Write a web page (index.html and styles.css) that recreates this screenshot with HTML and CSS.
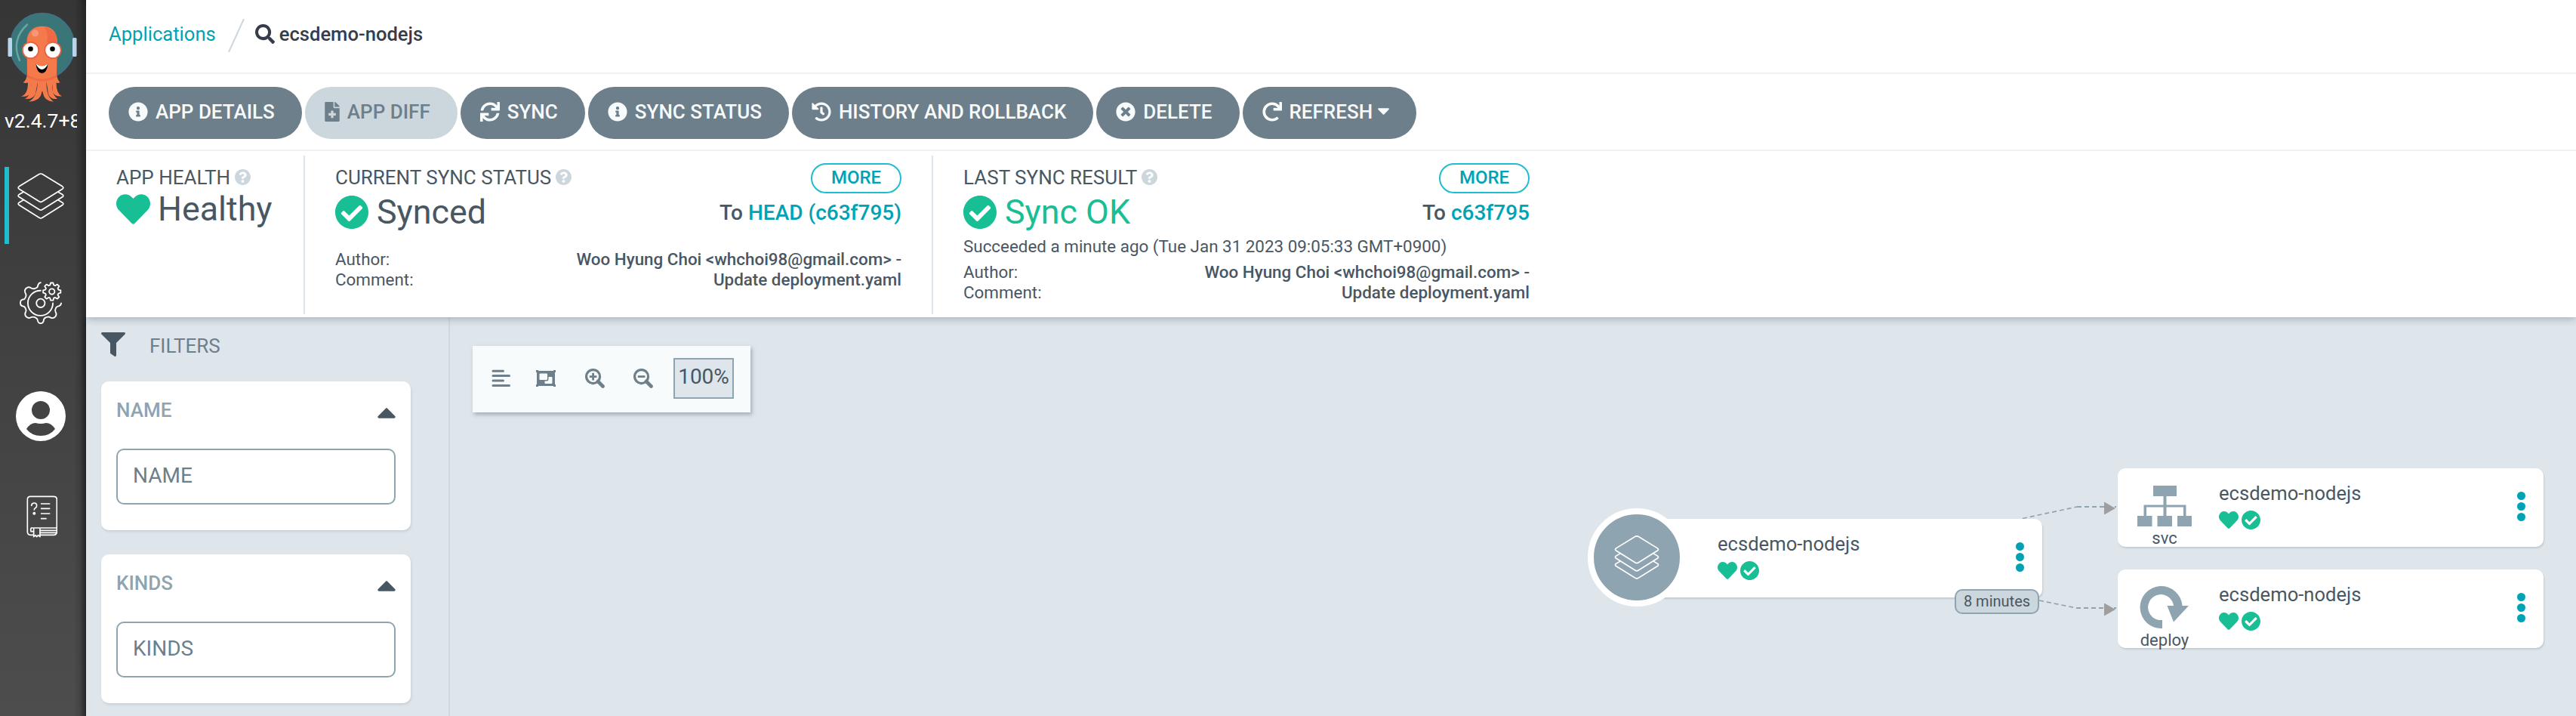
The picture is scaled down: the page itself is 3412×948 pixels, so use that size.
FILE: index.html
```html
<!DOCTYPE html>
<html lang="en">
<head>
<meta charset="utf-8">
<title>ecsdemo-nodejs</title>
<link rel="stylesheet" href="styles.css">
</head>
<body>
<svg class="defs" width="0" height="0">
  <symbol id="info" viewBox="0 0 512 512"><path d="M256 8C119.043 8 8 119.083 8 256c0 136.997 111.043 248 248 248s248-111.003 248-248C504 119.083 392.957 8 256 8zm0 110c23.196 0 42 18.804 42 42s-18.804 42-42 42-42-18.804-42-42 18.804-42 42-42zm56 254c0 6.627-5.373 12-12 12h-88c-6.627 0-12-5.373-12-12v-24c0-6.627 5.373-12 12-12h12v-64h-12c-6.627 0-12-5.373-12-12v-24c0-6.627 5.373-12 12-12h64c6.627 0 12 5.373 12 12v100h12c6.627 0 12 5.373 12 12v24z"/></symbol>
  <symbol id="check" viewBox="8 8 496 496"><path d="M504 256c0 136.967-111.033 248-248 248S8 392.967 8 256 119.033 8 256 8s248 111.033 248 248zM227.314 387.314l184-184c6.248-6.248 6.248-16.379 0-22.627l-22.627-22.627c-6.248-6.249-16.379-6.249-22.628 0L216 308.118l-70.059-70.059c-6.248-6.248-16.379-6.248-22.628 0l-22.627 22.627c-6.248 6.248-6.248 16.379 0 22.627l104 104c6.249 6.249 16.379 6.249 22.628.001z"/></symbol>
  <symbol id="heart" viewBox="0 32 512 448"><path d="M462.3 62.6C407.5 15.9 326 24.3 275.7 76.2L256 96.5l-19.7-20.3C186.1 24.3 104.5 15.9 49.7 62.6c-62.8 53.6-66.1 149.8-9.9 207.9l193.5 199.8c12.5 12.9 32.8 12.9 45.3 0l193.5-199.8c56.3-58.1 53-154.3-9.8-207.9z"/></symbol>
  <symbol id="question" viewBox="8 8 496 496"><path d="M504 256c0 136.997-111.043 248-248 248S8 392.997 8 256C8 119.083 119.043 8 256 8s248 111.083 248 248zM262.655 90c-54.497 0-89.255 22.957-116.549 63.758-3.536 5.286-2.353 12.415 2.715 16.258l34.699 26.31c5.205 3.947 12.621 3.008 16.665-2.122 17.864-22.658 30.113-35.797 57.303-35.797 20.429 0 45.698 13.148 45.698 32.958 0 14.976-12.363 22.667-32.534 33.976C247.128 238.528 216 254.941 216 296v4c0 6.627 5.373 12 12 12h56c6.627 0 12-5.373 12-12v-1.333c0-28.462 83.186-29.647 83.186-106.667 0-58.002-60.165-102-116.531-102zM256 338c-25.365 0-46 20.635-46 46 0 25.364 20.635 46 46 46s46-20.636 46-46c0-25.365-20.635-46-46-46z"/></symbol>
  <symbol id="times" viewBox="0 0 512 512"><path d="M256 8C119 8 8 119 8 256s111 248 248 248 248-111 248-248S393 8 256 8zm121.6 313.1c4.7 4.7 4.7 12.3 0 17L338 377.6c-4.7 4.7-12.3 4.7-17 0L256 312l-65.1 65.6c-4.7 4.7-12.3 4.7-17 0L134.4 338c-4.7-4.7-4.7-12.3 0-17l65.6-65-65.6-65.1c-4.7-4.7-4.7-12.3 0-17l39.6-39.6c4.7-4.7 12.3-4.7 17 0l65 65.7 65.1-65.6c4.7-4.7 12.3-4.7 17 0l39.6 39.6c4.7 4.7 4.7 12.3 0 17L312 256l65.6 65.1z"/></symbol>
  <symbol id="search" viewBox="0 0 512 512"><path d="M505 442.7L405.3 343c-4.5-4.5-10.6-7-17-7H372c27.6-35.3 44-79.7 44-128C416 93.1 322.9 0 208 0S0 93.1 0 208s93.1 208 208 208c48.3 0 92.7-16.4 128-44v16.3c0 6.4 2.5 12.5 7 17l99.7 99.7c9.4 9.4 24.6 9.4 33.9 0l28.3-28.3c9.4-9.4 9.4-24.6.1-34zM208 336c-70.7 0-128-57.2-128-128 0-70.7 57.2-128 128-128 70.7 0 128 57.2 128 128 0 70.7-57.2 128-128 128z"/></symbol>
  <symbol id="filter" viewBox="0 0 512 512"><path d="M487.976 0H24.028C2.71 0-8.047 25.866 7.058 40.971L192 225.941V432c0 7.831 3.821 15.17 10.237 19.662l80 55.98C298.02 518.69 320 507.493 320 487.98V225.941l184.947-184.97C520.021 25.896 509.338 0 487.976 0z"/></symbol>
  <symbol id="history" viewBox="0 0 512 512"><path d="M504 255.531c.253 136.64-111.18 248.372-247.82 248.468-59.015.042-113.223-20.53-155.822-54.911-11.077-8.94-11.905-25.541-1.839-35.607l11.267-11.267c8.609-8.609 22.353-9.551 31.891-1.984C173.062 425.135 212.781 440 256 440c101.705 0 184-82.311 184-184 0-101.705-82.311-184-184-184-48.814 0-93.149 18.969-126.068 49.932l50.754 50.754c10.08 10.08 2.941 27.314-11.313 27.314H24c-8.837 0-16-7.163-16-16V38.627c0-14.254 17.234-21.393 27.314-11.314l49.372 49.372C129.209 34.136 189.552 8 256 8c136.81 0 247.747 110.78 248 247.531zm-180.912 78.784l9.823-12.63c8.138-10.463 6.253-25.542-4.21-33.679L288 256.349V152c0-13.255-10.745-24-24-24h-16c-13.255 0-24 10.745-24 24v135.651l65.409 50.874c10.463 8.137 25.541 6.253 33.679-4.21z"/></symbol>
  <symbol id="redo" viewBox="0 0 512 512"><path d="M500.33 0h-47.41a12 12 0 0 0-12 12.57l4 82.76A247.42 247.42 0 0 0 256 8C119.34 8 7.9 119.53 8 256.19 8.1 393.07 119.1 504 256 504a247.1 247.1 0 0 0 166.18-63.91 12 12 0 0 0 .48-17.43l-34-34a12 12 0 0 0-16.38-.55A176 176 0 1 1 402.1 157.8l-101.53-4.87a12 12 0 0 0-12.57 12v47.41a12 12 0 0 0 12 12h200.33a12 12 0 0 0 12-12V12a12 12 0 0 0-12-12z"/></symbol>
  <symbol id="sync" viewBox="0 0 512 512"><path d="M440.65 12.57l4 82.77A247.16 247.16 0 0 0 255.83 8C134.73 8 33.91 94.92 12.29 209.82A12 12 0 0 0 24.09 224h49.05a12 12 0 0 0 11.67-9.26 175.91 175.91 0 0 1 317-56.94l-101.46-4.86a12 12 0 0 0-12.57 12v47.41a12 12 0 0 0 12 12H500a12 12 0 0 0 12-12V12a12 12 0 0 0-12-12h-47.37a12 12 0 0 0-11.98 12.57zM255.83 432a175.61 175.61 0 0 1-146-77.8l101.8 4.87a12 12 0 0 0 12.57-12v-47.4a12 12 0 0 0-12-12H12a12 12 0 0 0-12 12V500a12 12 0 0 0 12 12h47.35a12 12 0 0 0 12-12.6l-4.15-82.57A247.17 247.17 0 0 0 255.83 504c121.11 0 221.93-86.92 243.55-201.82a12 12 0 0 0-11.8-14.18h-49.05a12 12 0 0 0-11.67 9.26A175.86 175.86 0 0 1 255.83 432z"/></symbol>
  <symbol id="file" viewBox="0 0 384 512"><path d="M377 105L279.1 7c-4.5-4.5-10.6-7-17-7H256v128h128v-6.1c0-6.3-2.5-12.4-7-16.9zm-153 31V0H24C10.7 0 0 10.7 0 24v464c0 13.3 10.7 24 24 24h336c13.3 0 24-10.7 24-24V160H248c-13.3 0-24-10.7-24-24zm64 160v48c0 4.4-3.6 8-8 8h-56v56c0 4.4-3.6 8-8 8h-48c-4.4 0-8-3.6-8-8v-56h-56c-4.4 0-8-3.6-8-8v-48c0-4.4 3.6-8 8-8h56v-56c0-4.4 3.6-8 8-8h48c4.4 0 8 3.6 8 8v56h56c4.4 0 8 3.6 8 8z"/></symbol>
  <symbol id="caret" viewBox="8 190 304 172"><path d="M31.3 192h257.3c17.8 0 26.7 21.5 14.1 34.1L174.1 354.8c-7.8 7.8-20.5 7.8-28.3 0L17.2 226.1C4.6 213.5 13.5 192 31.3 192z"/></symbol>
  <symbol id="layers" viewBox="0 0 186 182"><g fill="none" stroke="#fff" stroke-linejoin="round" stroke-linecap="round"><path d="M87 4Q93 1 99 4L179 53Q186 58 179 63L99 113Q93 117 87 113L7 63Q0 58 7 53Z"/><path d="M24 75L7 85Q0 90 7 95L87 145Q93 149 99 145L179 95Q186 90 179 85L162 75"/><path d="M24 107L7 117Q0 122 7 127L87 177Q93 181 99 177L179 127Q186 122 179 117L162 107"/></g></symbol>
</svg>

<div class="app">
  <nav class="sidebar">
    <svg class="logo" viewBox="0 0 104 140" width="104" height="140">
      <ellipse cx="56" cy="61" rx="42.5" ry="43.5" fill="#3a7678" stroke="#42708a" stroke-width="1.6"/>
      <rect x="10.5" y="50" width="5.5" height="25" rx="1.5" fill="#b8d5ec"/><rect x="96" y="50" width="5.5" height="25" rx="1.5" fill="#b8d5ec"/>
      <path d="M36 32.500Q14 53 26 80" fill="none" stroke="#6ba5a4" stroke-width="2.400" stroke-linecap="round"/>
      <path d="M35.500 56C35.500 42 44 34.800 56 34.800S76 42 76 56L75 98Q76 106 79.500 109Q77 110.500 74.500 109.500Q74.500 124 82 127.500Q72 128 70 122L69 110Q68 125 76 131Q66 132 64 124L61.500 108Q61 128 71 134.500Q58 134 56.500 121H55.500Q54 134 38 134.500Q49 130 50 108L47 124Q44 132 33 131Q41 127 42 109L40.500 122Q38 129 28 127.500Q37 125 37 109.500Q33 110.500 30.500 109Q35 107 36 98Z" fill="#f47a4c"/>
      <path d="M58 35Q65 42 62 56H76Q76 40 58 35Z" fill="#ee6a44"/>
      <path d="M36 99Q56 110 75 99V102Q56 113 36 102Z" fill="#ee6a44"/>
      <circle cx="46.500" cy="44" r="4.500" fill="#f6977b"/>
      <circle cx="40.500" cy="66.500" r="11.500" fill="#ea5f44"/><circle cx="70" cy="66.500" r="11.500" fill="#ea5f44"/>
      <circle cx="40.500" cy="66.500" r="9.800" fill="#fff"/><circle cx="70" cy="66.500" r="9.800" fill="#fff"/>
      <circle cx="40.500" cy="64.700" r="3.300" fill="#000"/><circle cx="69.500" cy="64.700" r="3.300" fill="#000"/>
      <path d="M47.500 84.500Q55.500 90 63.500 84.500Q62 97 55.500 97T47.500 84.500Z" fill="#000"/><path d="M47.500 84.500Q55.500 90 63.500 84.500Q60 92 55.500 92T47.500 84.500Z" fill="#fff"/>
    </svg>
    <div class="version">v2.4.7+8</div>
    <div class="nav-apps"><svg width="62" height="61" stroke-width="5.200"><use href="#layers"/></svg></div>
    <svg class="nav-gear line" viewBox="75 486 175 174" width="58" height="58" stroke-width="5.500">
      <path d="M162 492Q152 494 151 505Q150 513 140 515Q132 518 126 515Q118 509 111 511Q100 515 99 524Q98 530 103 538Q106 545 99 556Q96 560 89 560Q81 562 81 574Q81 585 90 586Q99 587 101 594Q106 602 102 610Q97 618 103 627Q111 636 121 632Q128 628 137 630Q149 634 150 643Q152 655 162 655Q173 655 174 643Q175 633 186 630Q195 627 202 632Q213 637 221 628Q228 619 222 610Q218 603 222 595Q226 586 234 586Q244 584 244 574"/>
      <path d="M162 524A50 50 0 1 0 211 574"/><circle cx="162" cy="574" r="17"/>
      <g transform="translate(207 528)"><circle r="11"/><path d="M26-7.400L35-5V5L26 7.400L23.600 13.100L28.700 21.600L21.600 28.700L13.100 23.600L7.400 26L5 35H-5L-7.400 26L-13.100 23.600L-21.600 28.700L-28.700 21.600L-23.600 13.100L-26 7.400L-35 5V-5L-26-7.400L-23.600-13.100L-28.700-21.600L-21.600-28.700L-13.100-23.600L-7.400-26L-5-35H5L7.400-26L13.100-23.600L21.600-28.700L28.700-21.600L23.600-13.100Z"/></g>
    </svg>
    <svg class="nav-user" viewBox="0 0 66 66" width="66" height="66"><path fill="#fff" fill-rule="evenodd" d="M33 0A33 33 0 1 0 33 66A33 33 0 1 0 33 0ZM33 13A12 12 0 1 1 33 37A12 12 0 1 1 33 13ZM14 50Q19 42 26 42Q33 44 40 42Q47 42 52 50Q45 59 33 59T14 50Z"/></svg>
    <svg class="nav-docs line" viewBox="0 0 124 168" width="41.300" height="56" stroke-width="5">
      <path d="M26 157H16Q4 157 4 144V16Q4 4 16 4H108Q121 4 121 16V144Q121 157 108 157H54"/>
      <path d="M26 143H18Q15 136 19 129H119M54 139H119M54 148H119"/><path d="M29 132V164L36 158L41 164L47 158L54 164V132"/>
      <path d="M57 33H94M57 52H94M57 72H94M57 92H80" stroke-linecap="butt"/>
      <path d="M20 40Q21 30 31 30T41 41Q41 47 35 50Q31 52 31 57"/><circle cx="31" cy="71" r="3.500" fill="#fff"/>
    </svg>
  </nav>

  <main class="main">
    <header class="top">
      <div class="crumbs">
        <a class="link">Applications</a>
        <svg class="slash" width="22" height="44" viewBox="0 0 22 44"><path d="M1 44L21 0" stroke="#ccd6dd" stroke-width="2"/></svg>
        <svg class="crumb-icon" width="26" height="26"><use href="#search"/></svg>
        <span class="crumb-name">ecsdemo-nodejs</span>
      </div>
      <div class="actions">
        <button class="btn"><svg width="26" height="26"><use href="#info"/></svg>APP DETAILS</button>
        <button class="btn disabled"><svg width="20" height="26"><use href="#file"/></svg>APP DIFF</button>
        <button class="btn"><svg width="26" height="26"><use href="#sync"/></svg>SYNC</button>
        <button class="btn"><svg width="26" height="26"><use href="#info"/></svg>SYNC STATUS</button>
        <button class="btn"><svg width="26" height="26"><use href="#history"/></svg>HISTORY AND ROLLBACK</button>
        <button class="btn"><svg width="26" height="26"><use href="#times"/></svg>DELETE</button>
        <button class="btn"><svg width="26" height="26"><use href="#redo"/></svg>REFRESH<svg class="drop" width="15" height="9"><use href="#caret"/></svg></button>
      </div>
      <div class="status">
        <section class="col health">
          <div class="row title">APP HEALTH<svg class="q" width="21" height="21"><use href="#question"/></svg></div>
          <div class="row big short"><svg class="green" width="45" height="40"><use href="#heart"/></svg>Healthy</div>
        </section>
        <section class="col current">
          <div class="row title">CURRENT SYNC STATUS<svg class="q" width="21" height="21"><use href="#question"/></svg><span class="more">MORE</span></div>
          <div class="row big"><svg class="green" width="44" height="44"><use href="#check"/></svg>Synced<span class="to">To <a class="link">HEAD (c63f795)</a></span></div>
          <div class="meta first"><span>Author:</span><b>Woo Hyung Choi &lt;whchoi98@gmail.com&gt; -</b></div>
          <div class="meta"><span>Comment:</span><b>Update deployment.yaml</b></div>
        </section>
        <section class="col last">
          <div class="row title">LAST SYNC RESULT<svg class="q" width="21" height="21"><use href="#question"/></svg><span class="more">MORE</span></div>
          <div class="row big ok"><svg class="green" width="44" height="44"><use href="#check"/></svg>Sync OK<span class="to">To <a class="link">c63f795</a></span></div>
          <div class="result">Succeeded a minute ago (Tue Jan 31 2023 09:05:33 GMT+0900)</div>
          <div class="meta"><span>Author:</span><b>Woo Hyung Choi &lt;whchoi98@gmail.com&gt; -</b></div>
          <div class="meta"><span>Comment:</span><b>Update deployment.yaml</b></div>
        </section>
      </div>
    </header>

    <div class="body">
      <aside class="filters">
        <div class="filters-head"><svg width="32" height="32"><use href="#filter"/></svg><span>FILTERS</span></div>
        <div class="card"><div class="card-head">NAME<svg class="up" width="24" height="14"><use href="#caret"/></svg></div><div class="input">NAME</div></div>
        <div class="card"><div class="card-head">KINDS<svg class="up" width="24" height="14"><use href="#caret"/></svg></div><div class="input">KINDS</div></div>
      </aside>

      <div class="canvas">
        <div class="zoombar">
          <svg width="26" height="26" viewBox="0 0 26 26"><path d="M2.500 3.200H16M2.500 9.600H24M2.500 16H16M2.500 22.500H24" stroke="#6d7f8b" stroke-width="3" stroke-linecap="round" transform="translate(-.5 0)"/></svg>
          <svg width="26" height="26" viewBox="0 0 26 26"><path fill-rule="evenodd" d="M0 2H3V3H23V2H26V5H25V21H26V24H23V23H3V24H0V21H1V5H0ZM5.500 6.500Q4.500 6.500 4.500 7.500V14Q4.500 15 5.500 15H14Q15 15 15 14V7.500Q15 6.500 14 6.500ZM16.500 11V14.500Q16.500 16.500 14.500 16.500H11.500V19Q11.500 20 12.500 20H20.500Q21.500 20 21.500 19V12Q21.500 11 20.500 11Z"/></svg>
          <svg width="26" height="26" viewBox="0 0 26 26"><g fill="none" stroke="#6d7f8b"><circle cx="10.600" cy="10.600" r="9" stroke-width="3.200"/><path d="M17 17L23.500 23.500" stroke-width="4.600" stroke-linecap="round"/><path d="M5.800 10.600H15.400M10.600 5.800V15.400" stroke-width="2.800"/></g></svg>
          <svg width="26" height="26" viewBox="0 0 26 26"><g fill="none" stroke="#6d7f8b"><circle cx="10.600" cy="10.600" r="9" stroke-width="3.200"/><path d="M17 17L23.500 23.500" stroke-width="4.600" stroke-linecap="round"/><path d="M5.800 10.600H15.400" stroke-width="2.800"/></g></svg>
          <span class="pct">100%</span>
        </div>

        <svg class="edges" width="150" height="180" viewBox="2670 650 150 180" stroke="#8fa4b1" stroke-dasharray="6 4">
          <path d="M2679 686.500L2751 671" stroke-width="1.700"/><path d="M2751 671H2803" stroke-width="2"/>
          <path d="M2701 795L2750 805" stroke-width="1.700"/><path d="M2750 805H2803" stroke-width="2"/>
          <path d="M2787 664.500L2802 673L2787 681.500ZM2787 798.500L2802 807L2787 815.500Z" fill="#9e9e9e" stroke="none"/>
        </svg>
        <div class="node root">
          <div class="disc"><svg width="60" height="58" stroke-width="5.200"><use href="#layers"/></svg></div>
          <div class="node-text"><div>ecsdemo-nodejs</div><div class="states"><svg width="26" height="23"><use href="#heart"/></svg><svg width="25" height="25"><use href="#check"/></svg></div></div>
          <div class="dots"><i></i><i></i><i></i></div>
          <div class="age">8 minutes</div>
        </div>
        <div class="node svc">
          <div class="kind"><svg width="72" height="54" viewBox="0 0 72 54"><path d="M21 0H52V14H38.500V25.500H64.500V40H72V54H53V40H61V28.500H38.500V40H46V54H26.500V40H34.500V28.500H12V40H19.500V54H0V40H8.500V25.500H34.500V14H21Z"/></svg><span>svc</span></div>
          <div class="node-text"><div>ecsdemo-nodejs</div><div class="states"><svg width="26" height="23"><use href="#heart"/></svg><svg width="25" height="25"><use href="#check"/></svg></div></div>
          <div class="dots"><i></i><i></i><i></i></div>
        </div>
        <div class="node deploy">
          <div class="kind"><svg width="72" height="56" viewBox="0 0 72 56"><path d="M33 56A28 28 0 1 1 59.500 26H68L48 47.500L39.500 26H48A17 17 0 1 0 33 45Z"/></svg><span>deploy</span></div>
          <div class="node-text"><div>ecsdemo-nodejs</div><div class="states"><svg width="26" height="23"><use href="#heart"/></svg><svg width="25" height="25"><use href="#check"/></svg></div></div>
          <div class="dots"><i></i><i></i><i></i></div>
        </div>
      </div>
    </div>
  </main>
</div>
</body>
</html>
```
FILE: styles.css
```css
* { box-sizing: border-box; }
body { margin: 0; font-family: Roboto, "Liberation Sans", sans-serif; font-size: 26px; color: #495763; background: #dee5eb; overflow: hidden; }
svg { display: block; flex: none; fill: currentColor; }
svg.line { fill: none; stroke: #fff; stroke-linecap: round; stroke-linejoin: round; }
.defs { position: absolute; }
.app { display: flex; width: 3412px; height: 948px; }
.link { color: #00a2b3; }

.sidebar { flex: none; width: 114px; background: linear-gradient(90deg, transparent 98px, rgba(0,0,0,.12) 106px, rgba(0,0,0,.5) 114px), linear-gradient(#363636, #4d4d4d); }
.version { width: 96px; margin: 3px 0 0 6px; height: 36px; line-height: 34px; overflow: hidden; white-space: nowrap; color: #fff; font-size: 26.500px; }
.nav-apps { margin: 42px 0 0 6px; height: 102px; border-left: 6px solid #1fbdd0; padding: 8px 0 0 11px; }
.nav-gear { margin: 49px 0 0 25px; }
.nav-user { margin: 88px 0 0 21px; }
.nav-docs { margin: 72px 0 0 35px; }

.main { flex: 1; min-width: 0; display: flex; flex-direction: column; }
.top { flex: none; height: 420px; background: #fff; box-shadow: 0 2px 10px rgba(73,87,99,.4); z-index: 1; }
.crumbs { height: 98px; border-bottom: 2px solid #edf2f6; padding: 0 0 7px 30px; display: flex; align-items: center; font-size: 25.600px; }
.slash { margin: 5px 14px 0 16px; }
.crumb-icon { color: #363c4a; margin-right: 6px; }
.crumb-name { color: #363c4a; font-weight: 500; }
.actions { height: 102px; border-bottom: 2px solid #edf2f6; padding: 17px 0 0 30px; display: flex; gap: 4px; }
.btn { height: 69px; border: 0; border-radius: 35px; padding: 0 36px 4px 26px; display: flex; align-items: center; gap: 10px; background: #6d7f8b; color: #f8fbfb; font: 500 26px/30px Roboto, sans-serif; white-space: nowrap; }
.btn.disabled { background: #ccd6dd; color: #6d7f8b; }
.drop { margin-left: -3px; }

.status { display: flex; padding-top: 6px; }
.col { height: 210px; padding-top: 10px; border-right: 2px solid #dee5eb; }
.health { width: 290px; padding-left: 40px; }
.current { width: 832px; padding: 10px 40px 0 40px; }
.last { width: 790px; padding: 10px 0 0 40px; border: 0; }
.row { display: flex; align-items: center; white-space: nowrap; }
.title { height: 40px; line-height: 38px; padding-bottom: 3px; }
.q { color: #ccd6dd; margin-left: 6px; }
.more { margin: 3px 0 0 auto; width: 120px; height: 40px; flex: none; border: 2px solid #1fbdd0; border-radius: 20px; color: #00a2b3; font-size: 24px; font-weight: 500; line-height: 34px; text-align: center; }
.big { height: 49px; font-size: 44.800px; gap: 11px; }
.big.short { height: 41px; gap: 10px; }
.ok, .green { color: #18be94; }
.to { margin: 2px 0 0 auto; font-size: 28px; font-weight: 500; color: #495763; }
.meta { display: flex; justify-content: space-between; font-size: 22.400px; line-height: 27px; }
.meta b { font-weight: 500; }
.meta.first { margin-top: 25px; }
.result { font-size: 22.400px; line-height: 27px; margin: 8px 0 7px; }

.body { flex: 1; display: flex; min-height: 0; }
.filters { flex: none; width: 482px; border-right: 2px solid #d0d8df; padding: 20px 50px 0 20px; }
.filters-head { display: flex; height: 65px; gap: 32px; color: #495763; }
.filters-head span { color: #6d7f8b; line-height: 36px; }
.card { height: 197px; margin-bottom: 32px; background: #fff; border-radius: 10px; padding: 18px 20px 0; box-shadow: 1px 2px 3px rgba(73,87,99,.15); }
.card-head { display: flex; justify-content: space-between; align-items: center; height: 40px; color: #8fa4b1; font-weight: 500; }
.up { color: #495763; transform: rotate(180deg); margin-top: 7px; }
.input { height: 74px; margin-top: 31px; border: 2px solid #8fa4b1; border-radius: 10px; padding-left: 20px; color: #6d7f8b; font-size: 28px; line-height: 67px; }

.canvas { flex: 1; position: relative; }
.zoombar { display: flex; align-items: center; width: 368px; height: 88px; margin: 38px 0 0 30px; padding: 0 22px 0 25px; background: #f8fbfc; box-shadow: 2px 3px 5px rgba(109,127,139,.55); color: #6d7f8b; }
.zoombar svg { margin: 0 38.500px 3px 0; }
.zoombar svg:first-child { margin-right: 33px; }
.zoombar svg:nth-child(4) { margin-right: 27px; }
.pct { flex: none; width: 80px; height: 54px; margin-bottom: 2px; border: 2px solid #8fa4b1; background: #dee5eb; color: #495763; font-size: 28px; line-height: 46px; text-align: center; }
.edges { position: absolute; left: 2074px; top: 230px; }
.node { position: absolute; height: 104px; background: #fff; border-radius: 10px; box-shadow: 1px 2px 2px rgba(73,87,99,.18); display: flex; line-height: 30px; font-size: 25.600px; }
.root { left: 1570px; top: 267px; width: 539px; }
.svc { left: 2209px; top: 200px; width: 564px; }
.deploy { left: 2209px; top: 334px; width: 564px; }
.disc { flex: none; width: 130px; height: 130px; margin: -14px 0 0 -63px; border: 8px solid #fff; border-radius: 50%; background: #8fa4b1; display: flex; align-items: center; justify-content: center; }
.node-text { padding-top: 18px; }
.root .node-text { margin-left: 42px; }
.states { display: flex; gap: 4px; align-items: center; margin-top: 8px; color: #18be94; }
.kind { width: 124px; margin-right: 10px; padding-top: 23px; display: flex; flex-direction: column; align-items: center; color: #8fa4b1; }
.kind span { color: #495763; font-size: 22px; line-height: 26px; margin-top: 3px; }
.deploy .kind { padding-top: 22px; }
.dots { margin: 31px 24px 0 auto; display: grid; gap: 3px; align-content: start; }
.dots i { width: 11px; height: 11px; border-radius: 50%; background: #00a2b3; }
.age { position: absolute; right: 4px; bottom: -22px; width: 112px; height: 33px; border: 2px solid #8fa4b1; border-radius: 10px; background: #ccd6dd; font-size: 20px; line-height: 28px; text-align: center; }
```
